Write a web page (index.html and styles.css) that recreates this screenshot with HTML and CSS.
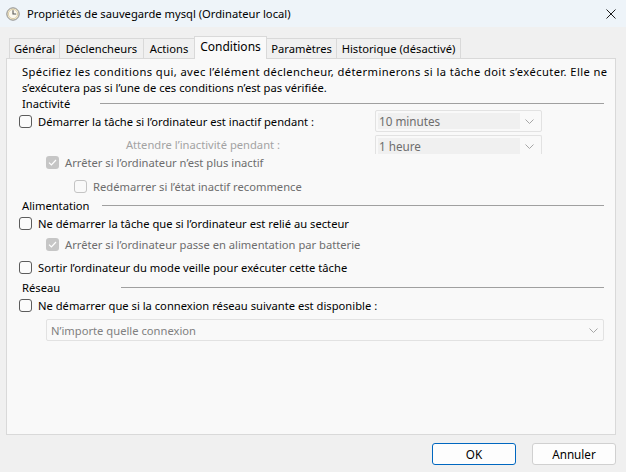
FILE: index.html
```html
<!DOCTYPE html>
<html lang="fr">
<head>
<meta charset="utf-8">
<title>Propriétés de sauvegarde mysql</title>
<link rel="stylesheet" href="styles.css">
</head>
<body>
<div class="window">
  <div class="titlebar">
    <svg class="app-icon" width="14" height="14" viewBox="0 0 14 14">
      <circle cx="7" cy="7" r="6.2" fill="#f4ecd2" stroke="#8a8a8a" stroke-width="1"/>
      <circle cx="7" cy="7" r="4.6" fill="#fbf8ee" stroke="#c9b98a" stroke-width="0.6"/>
      <path d="M7 3.6 V7 H9.8" fill="none" stroke="#555" stroke-width="1.1" stroke-linecap="round"/>
    </svg>
    <span class="title">Propriétés de sauvegarde mysql (Ordinateur local)</span>
    <svg class="close" width="10" height="10" viewBox="0 0 10 10">
      <path d="M0.5 0.5 L9.5 9.5 M9.5 0.5 L0.5 9.5" stroke="#1a1a1a" stroke-width="1"/>
    </svg>
  </div>

  <div class="tabs">
    <div class="tab w-gen">Général</div>
    <div class="tab w-dec">Déclencheurs</div>
    <div class="tab w-act">Actions</div>
    <div class="tab w-con selected">Conditions</div>
    <div class="tab w-par">Paramètres</div>
    <div class="tab w-his">Historique (désactivé)</div>
  </div>

  <div class="panel">
    <div class="desc"><span class="desc-l1">Spécifiez les conditions qui, avec l’élément déclencheur, déterminerons si la tâche doit s’exécuter. Elle ne</span><br>s’exécutera pas si l’une de ces conditions n’est pas vérifiée.</div>

    <div class="group-hdr"><span class="glabel gl-inact">Inactivité</span><span class="gline"></span></div>

    <div class="row-combo r1">
      <div class="cell-left lvl0"><span class="cb"></span><span>Démarrer la tâche si l’ordinateur est inactif pendant :</span></div>
      <div class="combo small"><span class="combo-text">10 minutes</span><span class="chev"><svg width="9" height="5" viewBox="0 0 9 5"><path d="M0.5 0.5 L4.5 4.5 L8.5 0.5" fill="none" stroke="#a6a6a6" stroke-width="1"/></svg></span></div>
    </div>

    <div class="row-combo r2">
      <div class="cell-right faint">Attendre l’inactivité pendant :</div>
      <div class="combo small clipped"><span class="combo-text">1 heure</span><span class="chev"><svg width="9" height="5" viewBox="0 0 9 5"><path d="M0.5 0.5 L4.5 4.5 L8.5 0.5" fill="none" stroke="#a6a6a6" stroke-width="1"/></svg></span></div>
    </div>

    <div class="row lvl1 r3 disabled"><span class="cb checked-dis"><svg width="9" height="7" viewBox="0 0 9 7"><path d="M1 3.6 L3.4 6 L8 1" fill="none" stroke="#fff" stroke-width="1.2"/></svg></span><span>Arrêter si l’ordinateur n’est plus inactif</span></div>

    <div class="row lvl2 r4 disabled"><span class="cb cb-dis"></span><span>Redémarrer si l’état inactif recommence</span></div>

    <div class="group-hdr h2"><span class="glabel gl-alim">Alimentation</span><span class="gline"></span></div>

    <div class="row lvl0 r5"><span class="cb"></span><span>Ne démarrer la tâche que si l’ordinateur est relié au secteur</span></div>

    <div class="row lvl1 r6 disabled"><span class="cb checked-dis"><svg width="9" height="7" viewBox="0 0 9 7"><path d="M1 3.6 L3.4 6 L8 1" fill="none" stroke="#fff" stroke-width="1.2"/></svg></span><span>Arrêter si l’ordinateur passe en alimentation par batterie</span></div>

    <div class="row lvl0 r7"><span class="cb"></span><span>Sortir l’ordinateur du mode veille pour exécuter cette tâche</span></div>

    <div class="group-hdr h3"><span class="glabel gl-res">Réseau</span><span class="gline"></span></div>

    <div class="row lvl0 r8"><span class="cb"></span><span>Ne démarrer que si la connexion réseau suivante est disponible :</span></div>

    <div class="combo wide"><span class="combo-text">N’importe quelle connexion</span><span class="chev"><svg width="9" height="5" viewBox="0 0 9 5"><path d="M0.5 0.5 L4.5 4.5 L8.5 0.5" fill="none" stroke="#a6a6a6" stroke-width="1"/></svg></span></div>
  </div>

  <div class="buttons">
    <button class="btn default">OK</button>
    <button class="btn">Annuler</button>
  </div>
</div>
</body>
</html>
```

FILE: styles.css
```css
* { box-sizing: border-box; }
html, body { margin: 0; padding: 0; }
body {
  width: 626px;
  height: 472px;
  background: #f0f0f0;
  font-family: "Noto Sans", "Open Sans", sans-serif;
  font-size: 11.2px;
  color: #000;
  overflow: hidden;
}
.window { width: 626px; height: 472px; display: flex; flex-direction: column; }

.titlebar {
  height: 27px;
  background: #eef4f9;
  display: flex;
  align-items: center;
  padding-left: 6px;
  flex: none;
}
.app-icon { flex: none; }
.title { margin-left: 7px; font-size: 11.2px; color: #000; }
.close { margin-left: auto; margin-right: 10px; }

.tabs {
  display: flex;
  align-items: flex-end;
  margin-top: 9px;
  padding-left: 9px;
  height: 22px;
  position: relative;
  z-index: 2;
}
.tab {
  height: 20px;
  border: 1px solid #d9d9d9;
  border-bottom: none;
  margin-left: -1px;
  background: #f0f0f0;
  display: flex;
  align-items: center;
  justify-content: center;
  white-space: nowrap;
  padding-bottom: 1px;
}
.tab:first-child { margin-left: 0; }
.tab.selected {
  height: 23px;
  margin-bottom: -1px;
  background: #f9f9f9;
  padding-bottom: 3px;
  font-size: 12px;
}
.w-gen { width: 51px; }
.w-dec { width: 85px; }
.w-act { width: 52px; }
.w-con { width: 73px; }
.w-par { width: 71px; }
.w-his { width: 125px; }

.panel {
  margin-left: 6px;
  width: 610px;
  height: 377px;
  background: #f9f9f9;
  border: 1px solid #d9d9d9;
  display: flex;
  flex-direction: column;
  flex: none;
  position: relative;
  z-index: 1;
}

.desc {
  padding-left: 15px;
  margin-top: 5px;
  line-height: 16px;
  white-space: nowrap;
}
.desc-l1 { letter-spacing: 0.4px; }

.group-hdr {
  display: flex;
  align-items: center;
  height: 16px;
  padding-left: 15px;
  padding-right: 11px;
  margin-top: -1px;
}
.group-hdr.h2 { margin-top: 3px; }
.group-hdr.h3 { margin-top: 4px; }
.glabel { flex: none; white-space: nowrap; }
.gl-inact { width: 78px; }
.gl-alim { width: 80px; }
.gl-res { width: 99px; }
.gline { flex: 1; height: 0; border-top: 1px solid #a0a0a0; margin-top: 1px; }

.row {
  display: flex;
  align-items: center;
  gap: 6px;
  height: 16px;
  white-space: nowrap;
}
.lvl0 { padding-left: 12px; }
.lvl1 { padding-left: 39px; }
.lvl2 { padding-left: 67px; }
.disabled { color: #6d6d6d; }
.faint { color: #a3a3a3; }

.cb {
  flex: none;
  width: 13px;
  height: 13px;
  border: 1px solid #5c5c5c;
  border-radius: 3px;
  background: #fbfbfb;
  display: inline-flex;
  align-items: center;
  justify-content: center;
}
.cb-dis { border-color: #c4c4c4; background: #f9f9f9; }
.checked-dis { border: none; background: #c6c6c6; }

.row-combo {
  display: grid;
  grid-template-columns: 368px 167px;
  align-items: center;
  white-space: nowrap;
}
.cell-left { display: flex; align-items: center; gap: 6px; }
.cell-right { text-align: right; padding-right: 95px; }
.r1 { height: 22px; margin-top: -1px; }
.r2 { height: 19px; margin-top: 3px; align-items: start; }
.r2 .cell-right { line-height: 19px; }
.r3 { margin-top: 0px; }
.r4 { margin-top: 8px; }
.r5 { margin-top: 2px; }
.r6 { margin-top: 5px; }
.r7 { margin-top: 7px; }
.r8 { margin-top: 2px; }

.combo {
  display: flex;
  align-items: center;
  border: 1px solid #e2e2e2;
  border-radius: 2px;
  background: #f9f9f9;
  height: 22px;
}
.combo.small { padding: 2px; }
.combo.small .combo-text {
  flex: 1;
  height: 100%;
  background: #f0f0f0;
  color: #6d6d6d;
  display: flex;
  align-items: center;
  padding-left: 1px;
  font-size: 11.7px;
}
.combo.small .chev { width: 19px; display: flex; justify-content: center; align-items: center; }
.combo.clipped { height: 19px; border-bottom: none; padding-bottom: 0; border-radius: 2px 2px 0 0; }
.combo.wide {
  margin-left: 39px;
  margin-top: 6px;
  width: 558px;
  padding-left: 4px;
  color: #808080;
}
.combo.wide .combo-text { flex: 1; }
.combo.wide .chev { width: 20px; display: flex; justify-content: center; align-items: center; }

.buttons {
  display: flex;
  justify-content: flex-end;
  gap: 16px;
  padding-right: 10px;
  margin-top: 8px;
}
.btn {
  width: 84px;
  height: 22px;
  font-family: "Noto Sans", "Open Sans", sans-serif;
  font-size: 11.7px;
  color: #000;
  background: #fdfdfd;
  border: 1px solid #d0d0d0;
  border-radius: 3px;
  padding: 0;
}
.btn.default { border-color: #0067c0; }
```
